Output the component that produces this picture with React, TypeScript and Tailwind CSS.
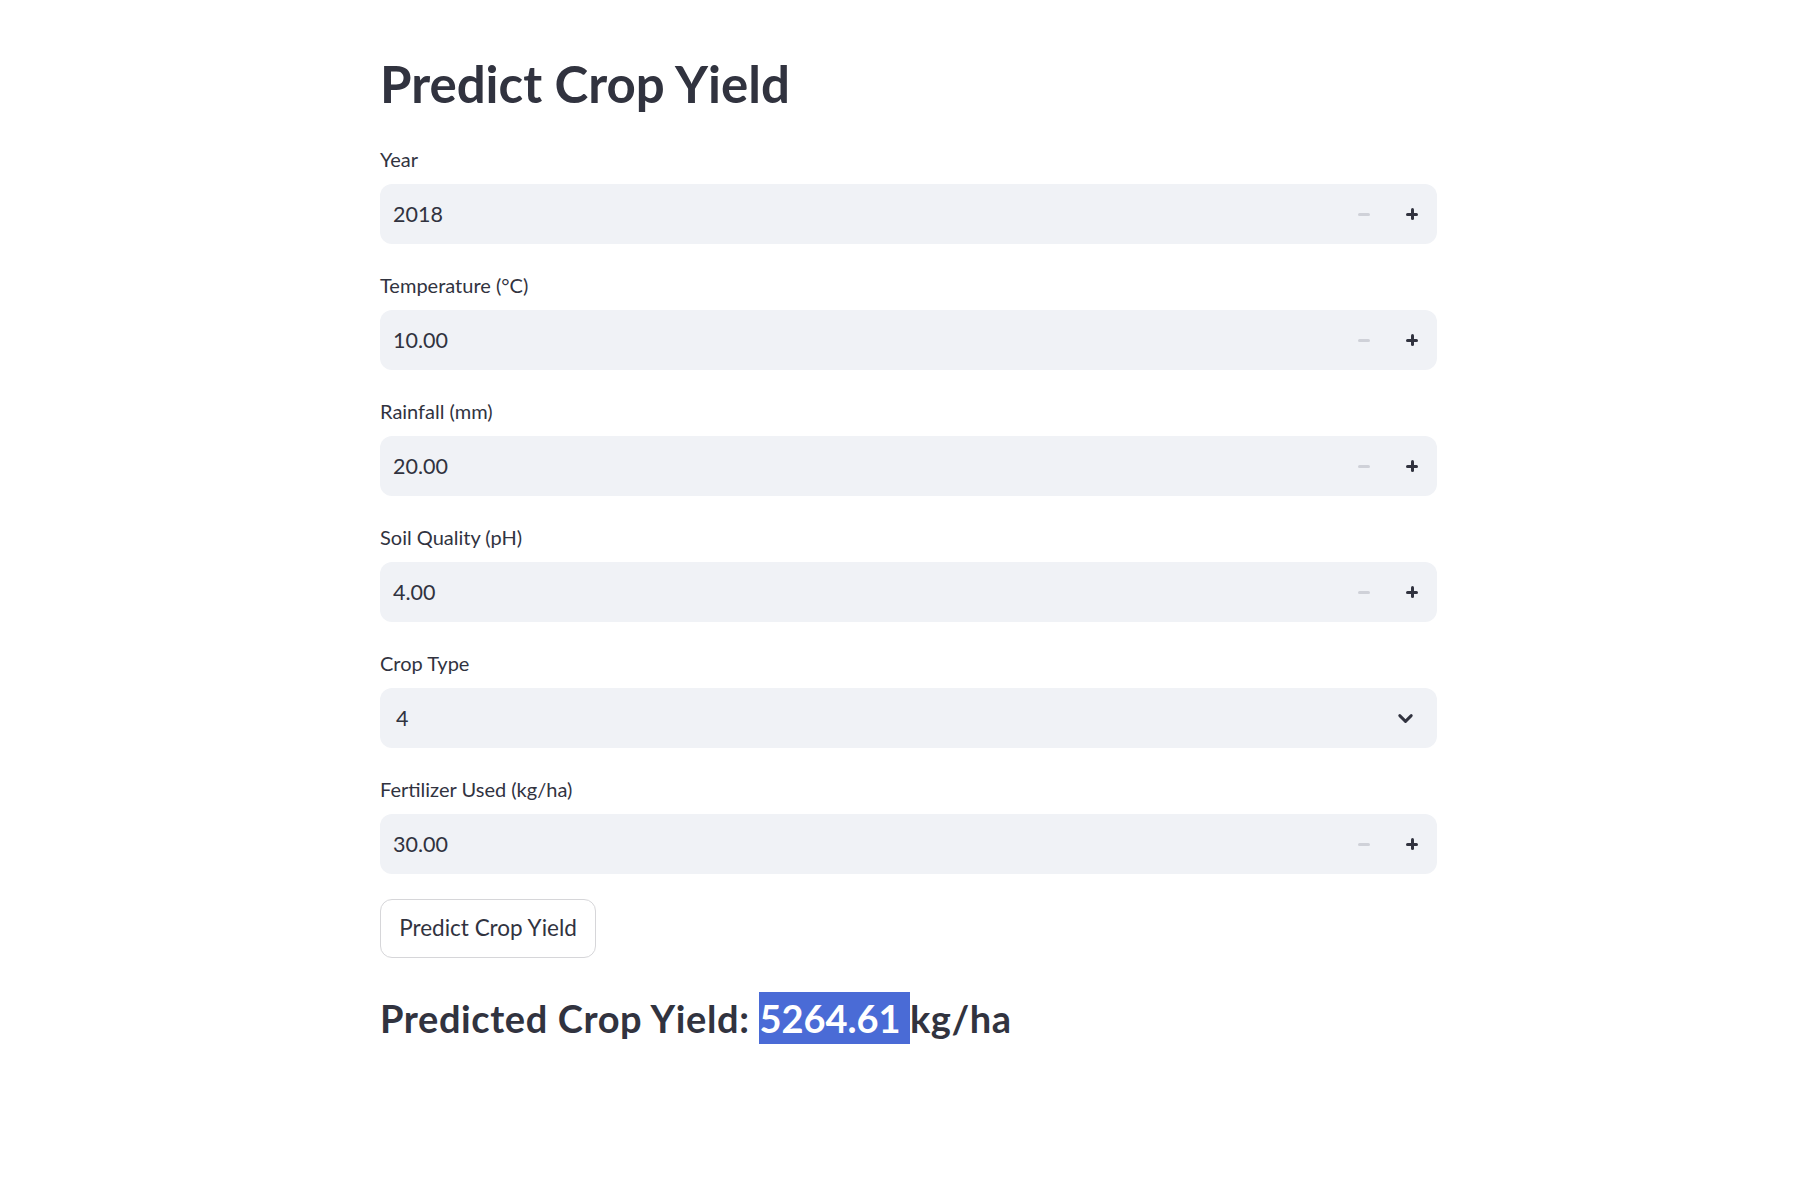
import { ChevronDown } from "lucide-react";

type NumberField = {
  label: string;
  value: string;
};

const FONT = "font-['Lato','Noto_Sans',sans-serif]";

function StepButtons() {
  return (
    <div className="flex h-full pr-[1px]">
      <button type="button" className="flex h-full w-[48px] items-center justify-center">
        <span className="block h-[3px] w-[12px] rounded-sm bg-[#cfd1d8]" />
      </button>
      <button type="button" className="relative flex h-full w-[48px] items-center justify-center">
        <span className="block h-[3px] w-[12px] rounded-sm bg-[#31333f]" />
        <span className="absolute block h-[12px] w-[3px] rounded-sm bg-[#31333f]" />
      </button>
    </div>
  );
}

function Label({ text }: { text: string }) {
  return <p className="mb-[12px] text-[20px] leading-[25px] text-[#31333f]">{text}</p>;
}

function NumberInput({ field }: { field: NumberField }) {
  return (
    <div>
      <Label text={field.label} />
      <div className="flex h-[60px] items-center rounded-[12px] bg-[#f0f2f6] pl-[13px]">
        <span className="flex-1 text-[21.5px] text-[#31333f]">{field.value}</span>
        <StepButtons />
      </div>
    </div>
  );
}

function SelectInput({ label, value }: { label: string; value: string }) {
  return (
    <div>
      <Label text={label} />
      <div className="flex h-[60px] items-center rounded-[12px] bg-[#f0f2f6] pl-[16px] pr-[20px]">
        <span className="flex-1 text-[21.5px] text-[#31333f]">{value}</span>
        <ChevronDown size={23} strokeWidth={3} className="text-[#31333f]" />
      </div>
    </div>
  );
}

export default function App() {
  return (
    <div className={`min-h-screen bg-white ${FONT} text-[#31333f]`}>
      <main className="ml-[380px] w-[1057px] pt-[54px]">
        <h1 className="text-[51px] font-bold leading-[60px]">Predict Crop Yield</h1>

        <div className="mt-[33px] flex flex-col gap-[29px]">
          <NumberInput field={{ label: "Year", value: "2018" }} />
          <NumberInput field={{ label: "Temperature (°C)", value: "10.00" }} />
          <NumberInput field={{ label: "Rainfall (mm)", value: "20.00" }} />
          <NumberInput field={{ label: "Soil Quality (pH)", value: "4.00" }} />
          <SelectInput label="Crop Type" value="4" />
          <NumberInput field={{ label: "Fertilizer Used (kg/ha)", value: "30.00" }} />
        </div>

        <button
          type="button"
          className="mt-[24.5px] flex h-[59px] w-[216px] items-center justify-center rounded-[12px] border border-[#d6d6d9] bg-white text-[22.5px] text-[#31333f]"
        >
          Predict Crop Yield
        </button>

        <h2 className="mt-[34px] text-[38px] font-bold leading-[52px] tracking-[0.6px]">
          Predicted Crop Yield:{" "}
          <span className="inline-block bg-[#4a6bd6] leading-[52px] tracking-normal text-white">5264.61&nbsp;</span>
          kg/ha
        </h2>
      </main>
    </div>
  );
}
